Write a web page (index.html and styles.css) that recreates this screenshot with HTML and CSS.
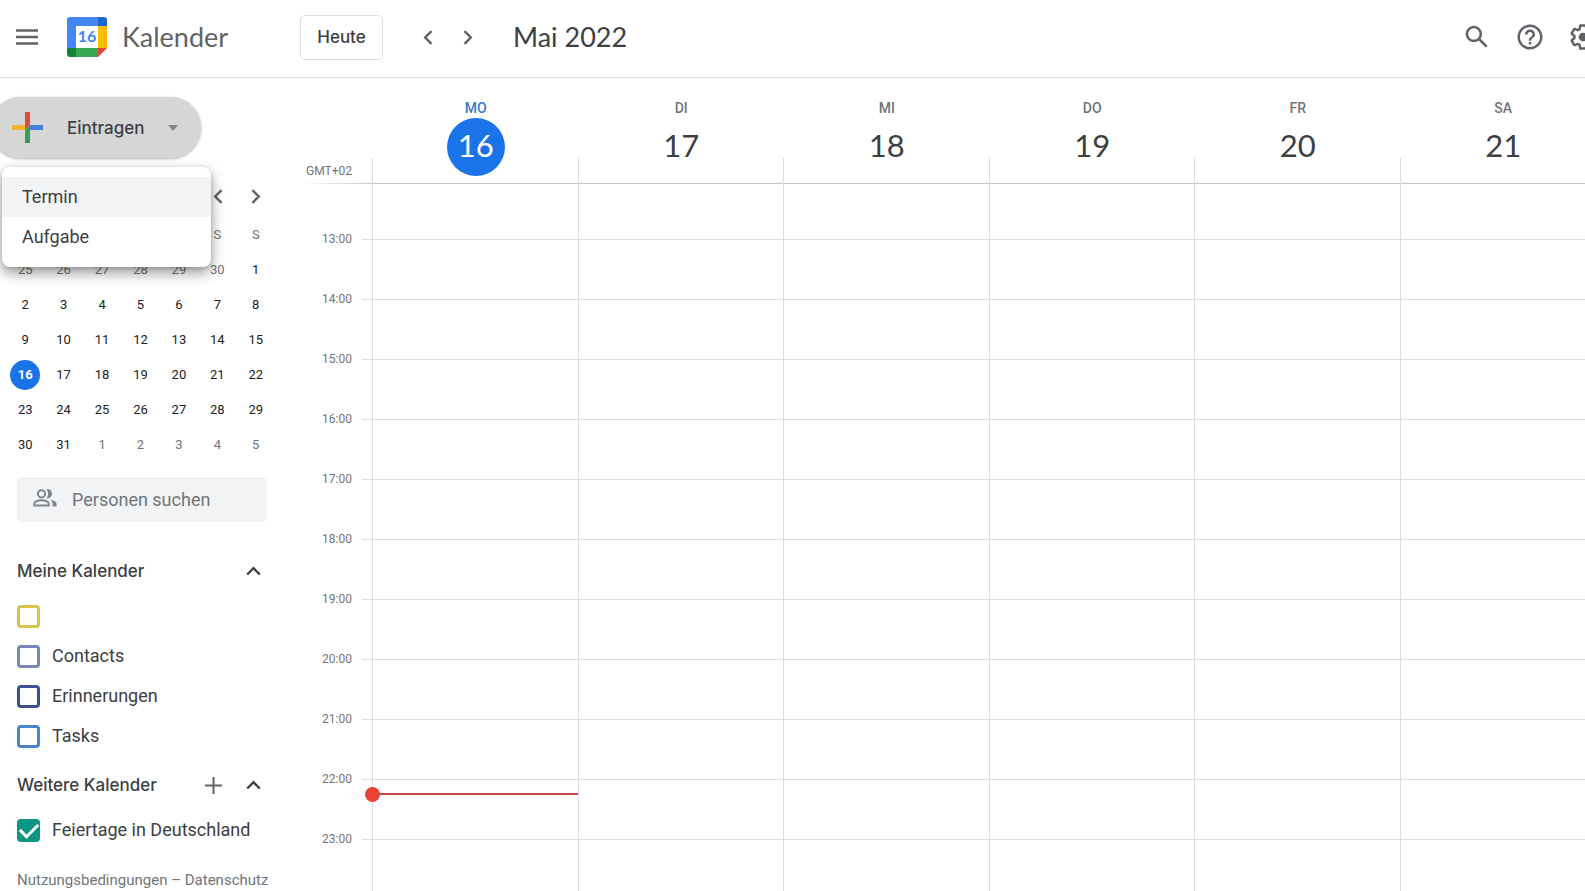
FILE: index.html
```html
<!DOCTYPE html>
<html lang="de">

<head>
    <meta charset="UTF-8">
    <meta name="viewport" content="width=device-width, initial-scale=1.0">
    <title>Kalender</title>
    <link rel="stylesheet" href="styles.css">
</head>

<body>
    <header class="topbar">
        <button class="icon-btn menu-btn" aria-label="Hauptmenü">
            <svg width="22" height="16" viewBox="0 0 22 16"><path d="M0 1.5h22M0 8h22M0 14.5h22" stroke="#5f6368" stroke-width="2.4"/></svg>
        </button>
        <a class="brand" href="#">
            <svg class="logo" width="40" height="40" viewBox="0 0 40 40">
                <path d="M3 0h28v9H9v22H0V3a3 3 0 0 1 3-3z" fill="#4285f4"/>
                <path d="M31 0h6a3 3 0 0 1 3 3v6h-9z" fill="#1967d2"/>
                <path d="M31 9h9v22h-9z" fill="#fbbc04"/>
                <path d="M9 31h22v9H9z" fill="#34a853"/>
                <path d="M0 31h9v9H3a3 3 0 0 1-3-3z" fill="#188038"/>
                <path d="M31 31h9l-9 9z" fill="#ea4335"/>
                <path d="M9 9h22v22H9z" fill="#fff"/>
                <text x="20" y="25" text-anchor="middle" class="logo-day">16</text>
            </svg>
            <span class="brand-name">Kalender</span>
        </a>
        <button class="today-btn">Heute</button>
        <div class="pager">
            <button class="icon-btn" aria-label="Vorherige Woche">
                <svg width="10" height="15" viewBox="0 0 10 15"><path d="M8.5 1.2L2.2 7.5l6.3 6.3" fill="none" stroke="#5f6368" stroke-width="2.4"/></svg>
            </button>
            <button class="icon-btn" aria-label="Nächste Woche">
                <svg width="10" height="15" viewBox="0 0 10 15"><path d="M1.5 1.2l6.3 6.3-6.3 6.3" fill="none" stroke="#5f6368" stroke-width="2.4"/></svg>
            </button>
        </div>
        <h1 class="period">Mai 2022</h1>
        <div class="tools">
            <button class="icon-btn" aria-label="Suche">
                <svg width="30" height="30" viewBox="0 0 24 24" fill="#5f6368"><path d="M20.49 19l-5.73-5.73C15.53 12.2 16 10.91 16 9.5 16 5.91 13.09 3 9.5 3S3 5.91 3 9.5 5.91 16 9.5 16c1.41 0 2.7-.47 3.77-1.24L19 20.49 20.49 19zM5 9.5C5 7.01 7.01 5 9.5 5S14 7.01 14 9.5 11.99 14 9.5 14 5 11.99 5 9.5z"/></svg>
            </button>
            <button class="icon-btn" aria-label="Hilfe">
                <svg width="30" height="30" viewBox="0 0 24 24" fill="#5f6368"><path d="M11 18h2v-2h-2v2zm1-16C6.48 2 2 6.48 2 12s4.48 10 10 10 10-4.48 10-10S17.52 2 12 2zm0 18c-4.41 0-8-3.59-8-8s3.59-8 8-8 8 3.59 8 8-3.59 8-8 8zm0-14c-2.21 0-4 1.79-4 4h2c0-1.1.9-2 2-2s2 .9 2 2c0 2-3 1.75-3 5h2c0-2.25 3-2.5 3-5 0-2.21-1.79-4-4-4z"/></svg>
            </button>
            <button class="icon-btn" aria-label="Einstellungen">
                <svg width="30" height="30" viewBox="0 0 24 24" fill="#5f6368"><path d="M13.85 22.25h-3.7c-.74 0-1.36-.54-1.45-1.27l-.27-1.89c-.27-.14-.53-.29-.79-.46l-1.8.72c-.7.26-1.47-.03-1.81-.65L2.2 15.53c-.35-.66-.2-1.44.36-1.88l1.53-1.19c-.01-.15-.02-.3-.02-.46 0-.15.01-.31.02-.46l-1.52-1.19c-.59-.45-.74-1.26-.37-1.88l1.85-3.19c.34-.62 1.11-.9 1.79-.63l1.81.73c.26-.17.52-.32.78-.46l.27-1.91c.09-.7.71-1.25 1.44-1.25h3.7c.74 0 1.36.54 1.45 1.27l.27 1.89c.27.14.53.29.79.46l1.8-.72c.71-.26 1.48.03 1.82.65l1.84 3.18c.36.66.2 1.44-.36 1.88l-1.52 1.19c.01.15.02.3.02.46s-.01.31-.02.46l1.52 1.19c.56.45.72 1.23.37 1.86l-1.86 3.22c-.34.62-1.11.9-1.8.63l-1.8-.72c-.26.17-.52.32-.78.46l-.27 1.91c-.1.68-.72 1.22-1.46 1.22zm-3.23-2h2.76l.37-2.55.53-.22c.44-.18.88-.44 1.34-.78l.45-.34 2.38.96 1.38-2.4-2.03-1.58.07-.56c.03-.26.06-.51.06-.78s-.03-.53-.06-.78l-.07-.56 2.03-1.58-1.39-2.4-2.39.96-.45-.35c-.42-.32-.87-.58-1.33-.77l-.52-.22-.37-2.55h-2.76l-.37 2.55-.53.21c-.44.19-.88.44-1.34.79l-.45.33-2.38-.95-1.39 2.39 2.03 1.58-.07.56a7 7 0 0 0-.06.79c0 .26.02.53.06.78l.07.56-2.03 1.58 1.38 2.4 2.39-.96.45.35c.43.33.86.58 1.33.77l.53.22.38 2.55z"/><circle cx="12" cy="12" r="3.5"/></svg>
            </button>
        </div>
    </header>

    <div class="page">
        <aside class="sidebar">
            <div class="create">
                <button class="create-btn" aria-haspopup="menu" aria-expanded="true">
                    <svg width="31" height="31" viewBox="0 0 31 31">
                        <path d="M13 0h5v13l-5 5z" fill="#dd4b3e"/>
                        <path d="M0 13h13v5H0z" fill="#f0b52a"/>
                        <path d="M18 13h13v5H18z" fill="#4a80dd"/>
                        <path d="M13 18l5-5v18h-5z" fill="#3a9d57"/>
                    </svg>
                    <span>Eintragen</span>
                    <svg class="caret" width="10" height="6" viewBox="0 0 10 6"><path d="M0 0h10L5 6z" fill="#80868b"/></svg>
                </button>
                <div class="create-menu" role="menu">
                    <button class="create-item active" role="menuitem">Termin</button>
                    <button class="create-item" role="menuitem">Aufgabe</button>
                </div>
            </div>

            <div class="mini-nav">
                <button class="icon-btn" aria-label="Vorheriger Monat">
                    <svg width="10" height="15" viewBox="0 0 10 15"><path d="M8.5 1.2L2.2 7.5l6.3 6.3" fill="none" stroke="#5f6368" stroke-width="2.4"/></svg>
                </button>
                <button class="icon-btn" aria-label="Nächster Monat">
                    <svg width="10" height="15" viewBox="0 0 10 15"><path d="M1.5 1.2l6.3 6.3-6.3 6.3" fill="none" stroke="#5f6368" stroke-width="2.4"/></svg>
                </button>
            </div>
            <table class="mini-cal">
                <thead>
                    <tr>
                        <th aria-label="Montag"></th>
                        <th aria-label="Dienstag"></th>
                        <th aria-label="Mittwoch"></th>
                        <th aria-label="Donnerstag"></th>
                        <th aria-label="Freitag"></th>
                        <th>S</th>
                        <th>S</th>
                    </tr>
                </thead>
                <tbody>
                    <tr><td class="other">25</td><td class="other">26</td><td class="other">27</td><td class="other">28</td><td class="other">29</td><td class="other">30</td><td>1</td></tr>
                    <tr><td>2</td><td>3</td><td>4</td><td>5</td><td>6</td><td>7</td><td>8</td></tr>
                    <tr><td>9</td><td>10</td><td>11</td><td>12</td><td>13</td><td>14</td><td>15</td></tr>
                    <tr><td><span class="today">16</span></td><td>17</td><td>18</td><td>19</td><td>20</td><td>21</td><td>22</td></tr>
                    <tr><td>23</td><td>24</td><td>25</td><td>26</td><td>27</td><td>28</td><td>29</td></tr>
                    <tr><td>30</td><td>31</td><td class="other">1</td><td class="other">2</td><td class="other">3</td><td class="other">4</td><td class="other">5</td></tr>
                </tbody>
            </table>

            <label class="people">
                <svg width="24" height="22" viewBox="0 0 24 22" fill="none" stroke="#80868b" stroke-width="2">
                    <circle cx="8.500" cy="4.800" r="3.600"/>
                    <path d="M1.200 16.500v-1.600c0-2.300 4.200-3.700 7.300-3.700s7.300 1.400 7.300 3.700v1.600z"/>
                    <path d="M13.500.2c3.300-.8 5.500 1.600 5.500 4.600s-2.400 5.200-5.500 4.500c2-2.600 2-6.500 0-9.100zM17.500 10.800c3.800.7 6 2.200 6 4.200v2.500h-4v-2.500c0-1.700-.7-3.100-2-4.200z" fill="#80868b" stroke="none"/>
                </svg>
                <input type="text" placeholder="Personen suchen" aria-label="Personen suchen">
            </label>

            <section class="cal-group">
                <div class="group-head">
                    <h2>Meine Kalender</h2>
                    <button class="icon-btn" aria-label="Meine Kalender einklappen">
                        <svg width="15" height="10" viewBox="0 0 15 10"><path d="M1.2 8.500l6.300-6.300 6.300 6.300" fill="none" stroke="#3c4043" stroke-width="2.4"/></svg>
                    </button>
                </div>
                <label class="cal-row"><input type="checkbox" class="yellow" aria-label="Kalender"></label>
                <label class="cal-row"><input type="checkbox" class="lavender"><span>Contacts</span></label>
                <label class="cal-row"><input type="checkbox" class="indigo"><span>Erinnerungen</span></label>
                <label class="cal-row"><input type="checkbox" class="blue"><span>Tasks</span></label>
            </section>

            <section class="cal-group more">
                <div class="group-head">
                    <h2>Weitere Kalender</h2>
                    <button class="icon-btn" aria-label="Weitere Kalender hinzufügen">
                        <svg width="17" height="17" viewBox="0 0 17 17"><path d="M8.500 0v17M0 8.500h17" stroke="#5f6368" stroke-width="2"/></svg>
                    </button>
                    <button class="icon-btn" aria-label="Weitere Kalender einklappen">
                        <svg width="15" height="10" viewBox="0 0 15 10"><path d="M1.2 8.500l6.300-6.300 6.300 6.300" fill="none" stroke="#3c4043" stroke-width="2.4"/></svg>
                    </button>
                </div>
                <label class="cal-row"><input type="checkbox" class="green" checked><span>Feiertage in Deutschland</span></label>
            </section>

            <footer class="legal"><a href="#">Nutzungsbedingungen</a> – <a href="#">Datenschutz</a></footer>
        </aside>

        <main class="week">
            <div class="week-head">
                <div class="zone">GMT+02</div>
                <div class="day-head current"><span class="dow">MO</span><span class="num">16</span></div>
                <div class="day-head"><span class="dow">DI</span><span class="num">17</span></div>
                <div class="day-head"><span class="dow">MI</span><span class="num">18</span></div>
                <div class="day-head"><span class="dow">DO</span><span class="num">19</span></div>
                <div class="day-head"><span class="dow">FR</span><span class="num">20</span></div>
                <div class="day-head"><span class="dow">SA</span><span class="num">21</span></div>
            </div>
            <div class="week-body">
                <ul class="hours">
                    <li>13:00</li>
                    <li>14:00</li>
                    <li>15:00</li>
                    <li>16:00</li>
                    <li>17:00</li>
                    <li>18:00</li>
                    <li>19:00</li>
                    <li>20:00</li>
                    <li>21:00</li>
                    <li>22:00</li>
                    <li>23:00</li>
                </ul>
                <div class="day"><div class="now"></div></div>
                <div class="day"></div>
                <div class="day"></div>
                <div class="day"></div>
                <div class="day"></div>
                <div class="day"></div>
            </div>
        </main>
    </div>
</body>

</html>
```
FILE: styles.css
```css
* {
    box-sizing: border-box;
}

body {
    margin: 0;
    height: 100vh;
    display: flex;
    flex-direction: column;
    overflow: hidden;
    background: #fff;
    color: #3c4043;
    font-family: Roboto, "Liberation Sans", sans-serif;
    font-size: 18px;
}

button {
    padding: 0;
    border: 0;
    background: none;
    color: inherit;
    font: inherit;
    cursor: pointer;
}

a {
    color: inherit;
    text-decoration: none;
}

svg {
    display: block;
    flex: none;
}

.icon-btn {
    display: flex;
    align-items: center;
    justify-content: center;
    flex: none;
    width: 40px;
    height: 40px;
}

/* top bar */
.topbar {
    display: flex;
    align-items: center;
    flex: none;
    height: 78px;
    padding: 0 0 3px 7px;
    border-bottom: 1px solid #dadce0;
    overflow: hidden;
}

.brand {
    display: flex;
    align-items: center;
    gap: 15px;
    width: 233px;
    margin-left: 20px;
    color: #5f6368;
    font-family: Lato, sans-serif;
    font-size: 27px;
}

.brand-name,
.period {
    padding-bottom: 2px;
}

.logo-day {
    fill: #4285f4;
    font-family: Lato, sans-serif;
    font-size: 16px;
    font-weight: 700;
}

.today-btn {
    width: 83px;
    height: 45px;
    border: 1px solid #dadce0;
    border-radius: 5px;
    font-family: Inter, sans-serif;
    font-size: 17px;
    font-weight: 500;
}

.pager {
    display: flex;
    margin: 0 25px;
}

.period {
    margin: 0;
    font-family: Lato, sans-serif;
    font-size: 27px;
    font-weight: 400;
}

.tools {
    display: flex;
    gap: 13px;
    margin-left: auto;
    margin-right: -18px;
}

.page {
    display: flex;
    flex: 1;
    min-height: 0;
}

/* left column */
.sidebar {
    flex: none;
    width: 290px;
    padding-top: 19px;
}

.create {
    position: relative;
    width: 211px;
}

.create-btn {
    display: flex;
    align-items: center;
    gap: 24px;
    width: 211px;
    height: 61px;
    margin-left: -10px;
    padding-left: 22px;
    border-radius: 31px;
    background: #d6d6d6;
    box-shadow: 0 1px 3px rgba(60, 64, 67, .4);
    font-family: Inter, sans-serif;
    font-size: 17px;
    font-weight: 500;
}

.create-menu {
    position: absolute;
    top: 70px;
    left: 2px;
    z-index: 2;
    width: 209px;
    padding: 10px 0;
    border-radius: 8px;
    background: #fff;
    box-shadow: 0 6px 14px rgba(0, 0, 0, .4), 0 1px 4px rgba(0, 0, 0, .15);
}

.create-item {
    display: block;
    width: 100%;
    height: 40px;
    padding: 0 0 2px 20px;
    text-align: left;
}

.create-item.active {
    background: #f1f3f4;
}

.mini-nav {
    display: flex;
    justify-content: flex-end;
    width: 275px;
    margin-top: 18px;
}

.mini-nav .icon-btn {
    width: 38px;
}

.mini-cal {
    width: 269px;
    margin: 1px 0 0 6px;
    border-collapse: collapse;
    table-layout: fixed;
    font-size: 13px;
}

.mini-cal th,
.mini-cal td {
    height: 35px;
    padding: 0;
    text-align: center;
    font-weight: 400;
}

.mini-cal td {
    color: #202124;
}

.mini-cal th,
.mini-cal .other {
    color: #70757a;
}

.today {
    display: block;
    width: 30px;
    margin: 0 auto;
    border-radius: 50%;
    background: #1a73e8;
    color: #fff;
    font-weight: 700;
    line-height: 30px;
}

.people {
    display: flex;
    align-items: center;
    gap: 15px;
    width: 250px;
    height: 45px;
    margin: 15px 0 0 17px;
    padding: 0 16px;
    border-radius: 5px;
    background: #f1f3f4;
}

.people input {
    flex: 1;
    min-width: 0;
    padding: 0;
    border: 0;
    outline: 0;
    background: none;
    color: #3c4043;
    font: inherit;
}

.people input::placeholder {
    color: #70757a;
    opacity: 1;
}

.cal-group {
    margin-top: 29px;
    padding-left: 17px;
}

.cal-group.more {
    margin-top: 9px;
}

.group-head {
    display: flex;
    align-items: center;
    width: 256px;
    height: 40px;
    margin-bottom: 5px;
}

.group-head h2 {
    flex: 1;
    margin: 0;
    font-family: Inter, sans-serif;
    font-size: 17px;
    font-weight: 500;
    white-space: nowrap;
}

.cal-row {
    display: flex;
    align-items: center;
    gap: 12px;
    height: 40px;
}

.cal-row span {
    padding-bottom: 2px;
}

.cal-row input {
    appearance: none;
    width: 23px;
    height: 23px;
    margin: 0;
    border: 3px solid;
    border-radius: 4px;
}

.yellow {
    color: #d8c350;
}

.lavender {
    color: #7986b8;
}

.indigo {
    color: #3f4f90;
}

.blue {
    color: #4a85c8;
}

.green {
    color: #0b9582;
}

.cal-row input:checked {
    display: flex;
    align-items: center;
    justify-content: center;
    background: currentColor;
}

.cal-row input:checked::before {
    content: "";
    flex: none;
    width: 15px;
    height: 8px;
    margin-bottom: 4px;
    border-left: 3px solid #fff;
    border-bottom: 3px solid #fff;
    transform: rotate(-45deg);
}

.legal {
    padding: 20px 0 0 17px;
    color: #70757a;
    font-size: 15px;
    line-height: 20px;
    white-space: nowrap;
}

/* week view: 82px time axis and six days, the last runs off the edge */
.week {
    display: flex;
    flex: 1;
    flex-direction: column;
    min-width: 0;
    overflow: hidden;
}

.week-head,
.week-body {
    display: grid;
    grid-template-columns: 82px repeat(6, 1fr);
    width: calc(100% + 20px);
}

.week-head {
    flex: none;
    height: 106px;
    background: linear-gradient(90deg, transparent 10px, #c4c7c9 82px) left bottom / 100% 1px no-repeat;
}

.zone {
    padding: 86px 20px 0 0;
    color: #70757a;
    font-size: 12px;
    text-align: right;
}

.day-head {
    display: flex;
    flex-direction: column;
    align-items: center;
    padding: 20px 0 0 2px;
    background: linear-gradient(#dadce0, #dadce0) left bottom / 1px 26px no-repeat;
}

.dow {
    color: #70757a;
    font-size: 14px;
    font-weight: 500;
    line-height: 20px;
}

.num {
    width: 58px;
    height: 58px;
    border-radius: 50%;
    font-family: Lato, sans-serif;
    font-size: 31px;
    line-height: 54px;
    text-align: center;
}

.current .dow {
    color: #3b78c4;
}

.current .num {
    background: #1a73e8;
    color: #fff;
}

.week-body {
    flex: 1;
    min-height: 0;
}

.hours {
    margin: 0;
    padding: 25px 0 0;
    list-style: none;
    color: #70757a;
    font-size: 12px;
}

.hours li {
    display: flex;
    align-items: center;
    justify-content: flex-end;
    gap: 10px;
    height: 60px;
}

.hours li::after {
    content: "";
    width: 10px;
    height: 1px;
    background: #dadce0;
}

.day {
    position: relative;
    border-left: 1px solid #dadce0;
    background: repeating-linear-gradient(transparent 0 59px, #dadce0 59px 60px) 0 -4px / 100% 780px;
}

/* current time */
.now {
    position: absolute;
    top: 609px;
    left: 0;
    right: 0;
    height: 2px;
    background: #c44c40;
}

.now::before {
    content: "";
    position: absolute;
    top: -6px;
    left: -8px;
    width: 15px;
    height: 15px;
    border-radius: 50%;
    background: #ea4335;
}
```
